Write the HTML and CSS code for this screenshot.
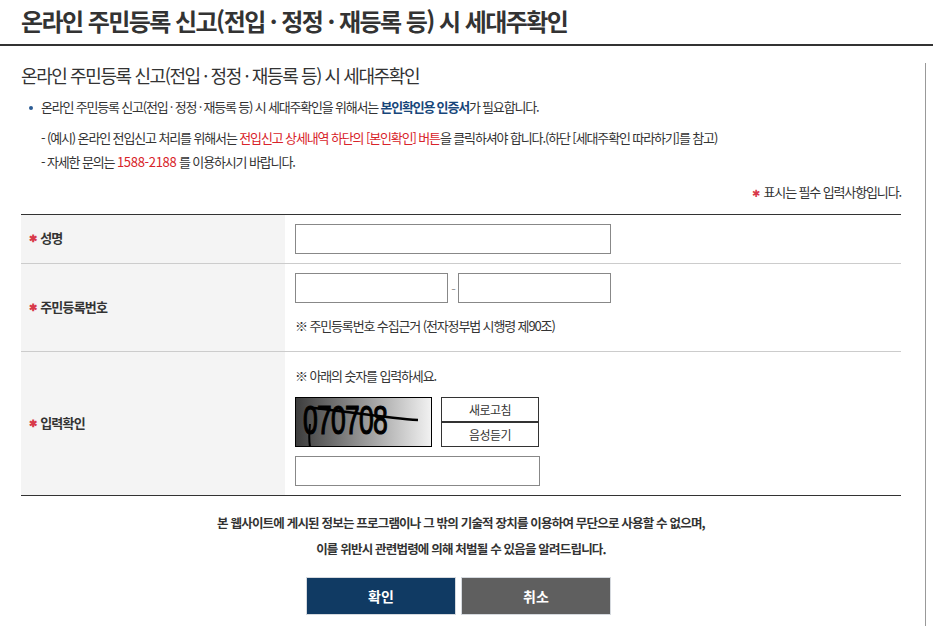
FILE: index.html
```html
<!DOCTYPE html>
<html lang="ko">
<head>
    <meta charset="UTF-8">
    <meta name="viewport" content="width=device-width, initial-scale=1.0">
    <title>온라인 주민등록 신고 시 세대주확인</title>
    <link rel="stylesheet" href="styles.css">
</head>
<body>
    <h1 class="page-title">온라인 주민등록 신고(전입 · 정정 · 재등록 등) 시 세대주확인</h1>

    <div class="content">
        <h2 class="sub-title">온라인 주민등록 신고(전입 · 정정 · 재등록 등) 시 세대주확인</h2>

        <p class="bullet">온라인 주민등록 신고(전입 · 정정 · 재등록 등) 시 세대주확인을 위해서는 <strong class="blue">본인확인용 인증서</strong>가 필요합니다.</p>
        <p class="note">- (예시) 온라인 전입신고 처리를 위해서는 <span class="red">전입신고 상세내역 하단의 [본인확인] 버튼</span>을 클릭하셔야 합니다.(하단 [세대주확인 따라하기]를 참고)</p>
        <p class="note">- 자세한 문의는 <span class="red phone">1588-2188</span> 를 이용하시기 바랍니다.</p>

        <p class="required-note"><span class="star">✱</span> 표시는 필수 입력사항입니다.</p>

        <div class="form">
            <div class="form-row row-name">
                <div class="form-label"><span class="star">✱</span> 성명</div>
                <div class="form-field">
                    <input type="text" class="input-full">
                </div>
            </div>
            <div class="form-row row-id">
                <div class="form-label"><span class="star">✱</span> 주민등록번호</div>
                <div class="form-field">
                    <div class="id-inputs">
                        <input type="text" class="input-half">
                        <span class="dash">-</span>
                        <input type="password" class="input-half">
                    </div>
                    <p class="field-note">※ 주민등록번호 수집근거 (전자정부법 시행령 제90조)</p>
                </div>
            </div>
            <div class="form-row row-captcha">
                <div class="form-label"><span class="star">✱</span> 입력확인</div>
                <div class="form-field">
                    <p class="field-note captcha-note">※ 아래의 숫자를 입력하세요.</p>
                    <div class="captcha">
                        <svg class="captcha-img" width="137" height="50" viewBox="0 0 137 50">
                            <defs>
                                <linearGradient id="captchaBg">
                                    <stop offset="0" stop-color="#3c3c3c"/>
                                    <stop offset="1" stop-color="#f2f2f2"/>
                                </linearGradient>
                            </defs>
                            <rect x="0.5" y="0.5" width="136" height="49" fill="url(#captchaBg)" stroke="#000"/>
                            <text x="8" y="37" class="captcha-text" textLength="84" lengthAdjust="spacingAndGlyphs">070708</text>
                            <path d="M18 11 C50 14 90 21 123 23" fill="none" stroke="#000" stroke-width="2.5"/>
                            <path d="M15 27 C14 36 14 44 15 50" fill="none" stroke="#000" stroke-width="2"/>
                        </svg>
                        <div class="captcha-btns">
                            <button type="button">새로고침</button>
                            <button type="button">음성듣기</button>
                        </div>
                    </div>
                    <input type="text" class="input-captcha">
                </div>
            </div>
        </div>

        <p class="warning">본 웹사이트에 게시된 정보는 프로그램이나 그 밖의 기술적 장치를 이용하여 무단으로 사용할 수 없으며,</p>
        <p class="warning">이를 위반시 관련법령에 의해 처벌될 수 있음을 알려드립니다.</p>

        <div class="actions">
            <button type="button" class="btn btn-ok">확인</button>
            <button type="button" class="btn btn-cancel">취소</button>
        </div>
    </div>
</body>
</html>
```
FILE: styles.css
```css
* {
    box-sizing: border-box;
}

html, body {
    height: 626px;
    overflow: hidden;
}

body {
    margin: 0;
    background-color: white;
    font-family: "Noto Sans CJK KR", "Noto Sans", sans-serif;
    color: #333;
    font-size: 13px;
    letter-spacing: -1.13px;
}

p {
    margin: 0;
}

.page-title {
    height: 46px;
    margin: 0;
    padding-left: 21px;
    border-bottom: 2px solid #333;
    font-size: 24px;
    line-height: 41px;
    font-weight: 700;
    letter-spacing: -1.55px;
    white-space: nowrap;
}

.content {
    width: 926px;
    height: 580px;
    padding: 0 24px 0 21px;
    border-right: 1px solid #999;
}

.sub-title {
    margin: 17px 0 0;
    font-size: 18px;
    line-height: 24px;
    font-weight: 400;
    letter-spacing: -1.4px;
}

.bullet {
    position: relative;
    margin-top: 10px;
    padding-left: 20px;
    line-height: 20px;
    letter-spacing: -1.2px;
}

.bullet::before {
    content: "";
    position: absolute;
    left: 8px;
    top: 9px;
    width: 4px;
    height: 4px;
    border-radius: 50%;
    background-color: #2b5c94;
}

.note {
    padding-left: 20px;
    margin-top: 11px;
    line-height: 20px;
}

.note + .note {
    margin-top: 4px;
}

.blue {
    color: #17467a;
    font-weight: 700;
}

.red {
    color: #d8232a;
}

.phone {
    letter-spacing: -0.3px;
}

.star {
    color: #d8394a;
    font-size: 10px;
}

.required-note {
    margin-top: 10px;
    text-align: right;
    line-height: 20px;
}

.required-note .star {
    margin-right: 2px;
}

.form {
    margin-top: 11px;
    border-top: 1px solid #333;
    border-bottom: 1px solid #333;
}

.form-row {
    display: flex;
    border-bottom: 1px solid #ccc;
}

.form-row:last-child {
    border-bottom: none;
}

.row-name {
    height: 49px;
}

.row-id {
    height: 88px;
}

.row-captcha {
    height: 143px;
}

.form-label {
    display: flex;
    align-items: center;
    gap: 4px;
    flex: 0 0 264px;
    padding: 0 0 3px 8px;
    background-color: #f4f4f4;
    font-weight: 700;
    letter-spacing: -0.8px;
}

.form-field {
    flex: 1;
    padding: 9px 10px;
}

input {
    display: block;
    height: 30px;
    border: 1px solid #888;
    background-color: white;
    border-radius: 0;
    padding: 0 6px;
}

.input-full {
    width: 316px;
}

.id-inputs {
    display: flex;
    align-items: center;
    width: 316px;
    justify-content: space-between;
}

.input-half {
    width: 153px;
}

.dash {
    color: #999;
}

.field-note {
    margin-top: 13px;
    line-height: 20px;
}

.captcha-note {
    margin-top: 5px;
}

.captcha {
    display: flex;
    gap: 9px;
    margin-top: 11px;
}

.captcha-img {
    display: block;
}

.captcha-text {
    font-family: "Liberation Sans", sans-serif;
    font-size: 40px;
    fill: #000;
    stroke: #000;
    stroke-width: 1.2px;
}

.captcha-btns {
    display: flex;
    flex-direction: column;
    width: 98px;
}

.captcha-btns button {
    height: 25px;
    padding: 0;
    border: 1px solid #333;
    background-color: white;
    color: #333;
    font-family: inherit;
    font-size: 12px;
    letter-spacing: -0.6px;
}

.input-captcha {
    width: 245px;
    margin-top: 9px;
}

.warning {
    text-align: center;
    font-weight: 700;
    font-size: 12.5px;
    line-height: 20px;
    margin-top: 17px;
    letter-spacing: -0.8px;
}

.warning + .warning {
    margin-top: 6px;
}

.actions {
    display: flex;
    justify-content: center;
    gap: 5px;
    margin-top: 18px;
    padding-right: 5px;
}

.btn {
    width: 150px;
    height: 38px;
    border: 1px solid #d5d9de;
    color: white;
    font-family: inherit;
    font-size: 14px;
    font-weight: 700;
}

.btn-ok {
    background-color: #103a63;
}

.btn-cancel {
    background-color: #5f5f5f;
}
```
